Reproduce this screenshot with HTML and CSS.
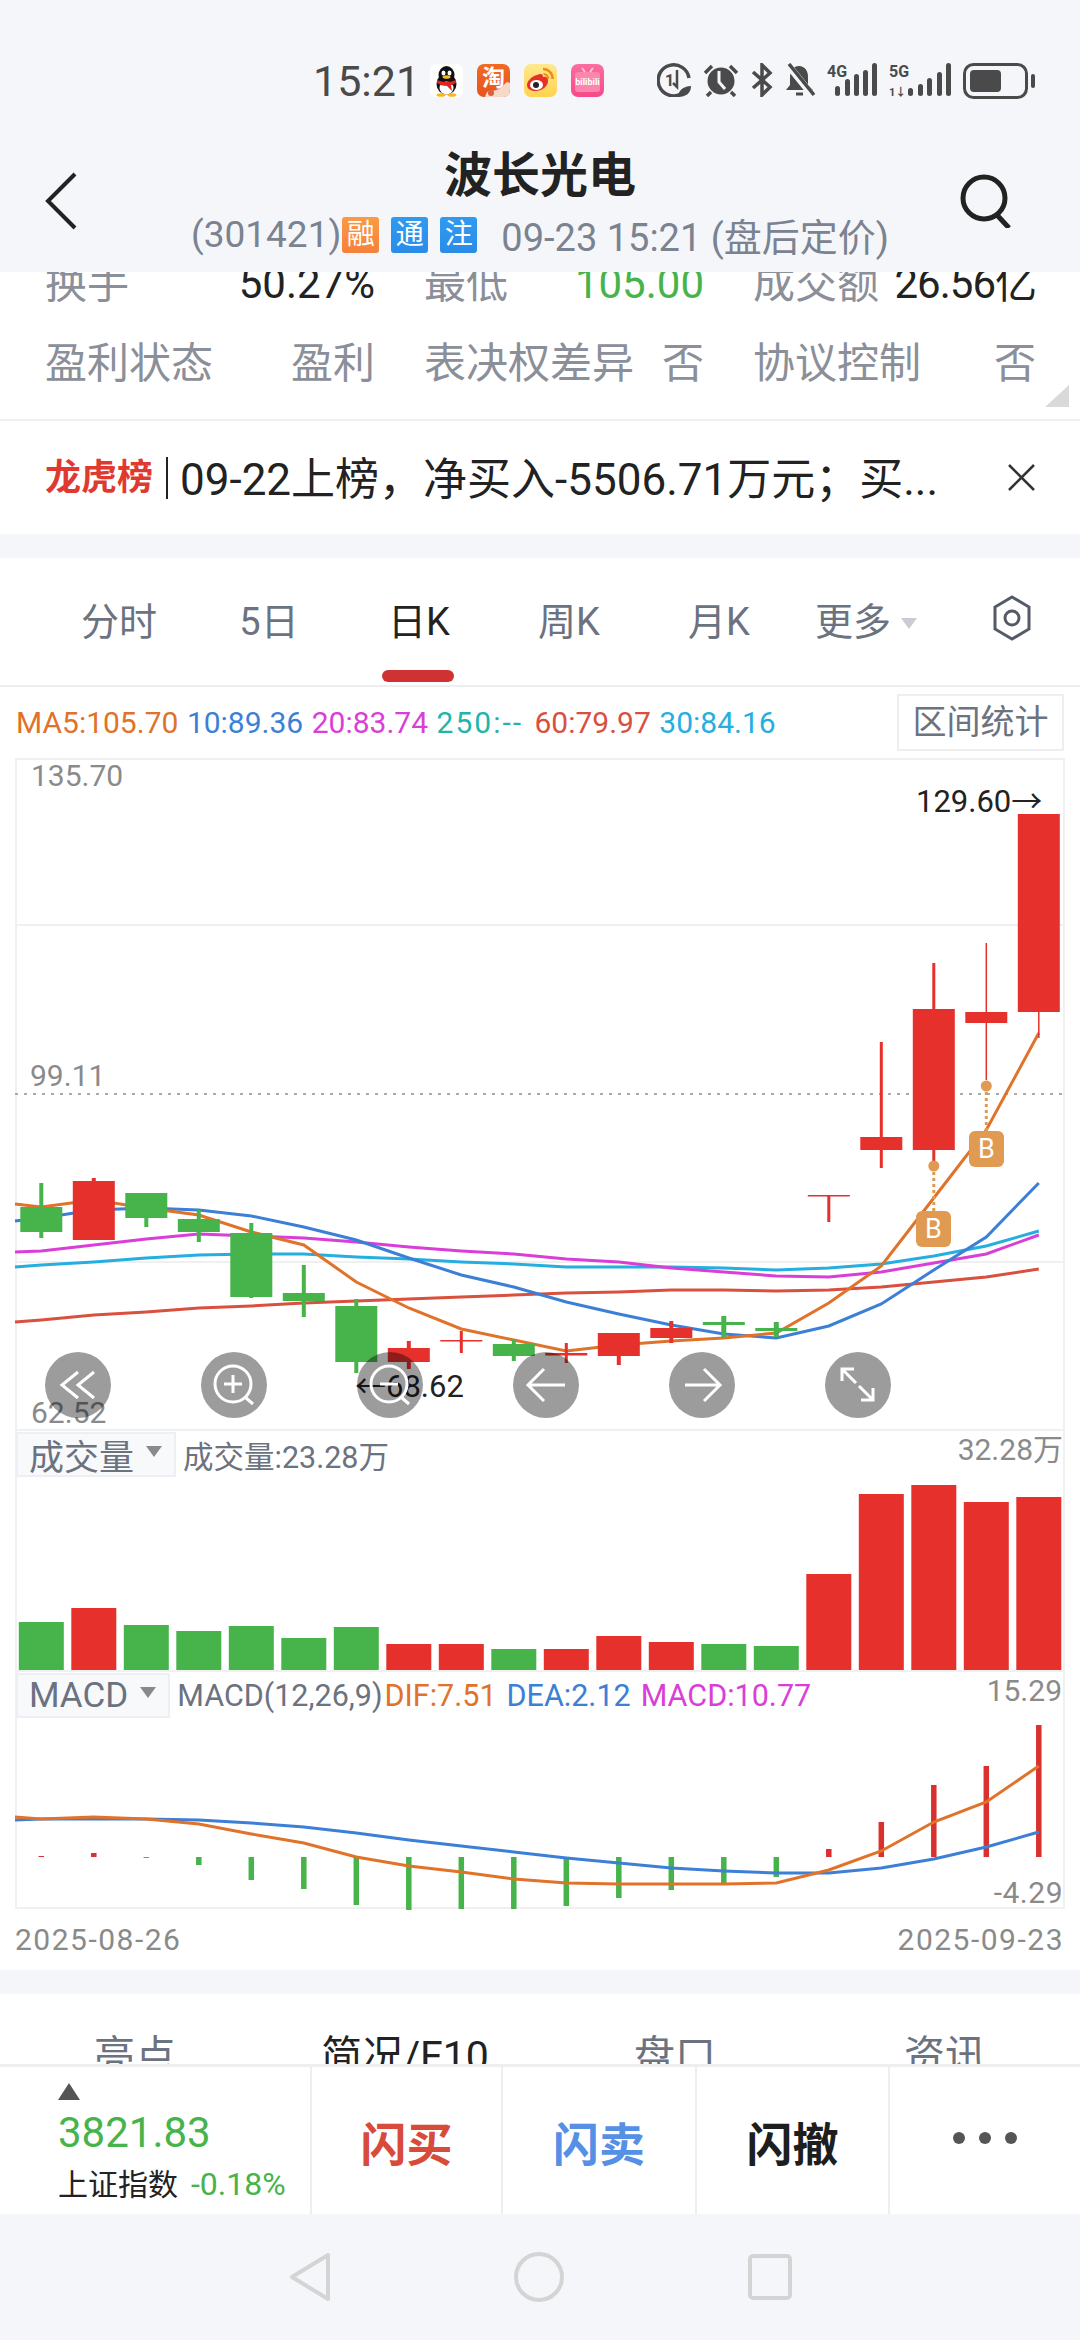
FILE: index.html
```html
<!DOCTYPE html>
<html lang="zh-CN">
  <head>
    <meta charset="UTF-8" />
    <meta name="viewport" content="width=device-width, initial-scale=1.0" />
    <title>波长光电</title>
    <link rel="stylesheet" href="styles.css">
  </head>
  <body>
    <div class="top">
      <div class="status">
        <span class="time">15:21</span>
        <div class="app-icons">
          <svg width="33" height="33" viewBox="0 0 33 33">
            <rect width="33" height="33" rx="6" fill="#fff"/>
            <ellipse cx="16.5" cy="20" rx="10" ry="10.5" fill="#111"/>
            <ellipse cx="16.5" cy="11" rx="8" ry="9" fill="#111"/>
            <ellipse cx="16.5" cy="24" rx="7" ry="6.5" fill="#fff"/>
            <ellipse cx="13.5" cy="9" rx="2" ry="2.6" fill="#fff"/>
            <ellipse cx="19.5" cy="9" rx="2" ry="2.6" fill="#fff"/>
            <ellipse cx="16.5" cy="13" rx="4" ry="1.8" fill="#f5b81f"/>
            <path d="M7 16q9.500 4 19 0v3q-3 2-5 2l1 6-5-5q-6 0-10-3z" fill="#e0241f"/>
            <ellipse cx="11" cy="31" rx="4.500" ry="1.800" fill="#f5b81f"/>
            <ellipse cx="22" cy="31" rx="4.500" ry="1.800" fill="#f5b81f"/>
          </svg>
          <svg width="33" height="33" viewBox="0 0 33 33">
            <defs>
              <linearGradient id="taoBg" x1="0" y1="0" x2="0" y2="1">
                <stop offset="0" stop-color="#f26a21"/>
                <stop offset="1" stop-color="#e8521f"/>
              </linearGradient>
            </defs>
            <rect width="33" height="33" rx="7" fill="url(#taoBg)"/>
            <text class="icon-text tao" x="16.500" y="21.500">淘</text>
            <path d="M8 33q2-8 8-6l6-2 8-7 3 1v6q0 8-7 8z" fill="#f6d9c6"/>
            <circle cx="14" cy="29" r="3" fill="#d9623a"/>
          </svg>
          <svg width="33" height="33" viewBox="0 0 33 33">
            <defs>
              <linearGradient id="weiboBg" x1="0" y1="0" x2="0" y2="1">
                <stop offset="0" stop-color="#ffe88f"/>
                <stop offset="1" stop-color="#ffd34f"/>
              </linearGradient>
            </defs>
            <rect width="33" height="33" rx="7" fill="url(#weiboBg)"/>
            <path d="M13 11q6-3 6 2q5-1 5 4c0 6-7 10-12 10c-5 0-9-2-9-6c0-4 5-9 10-10z" fill="#e4312b"/>
            <ellipse cx="12.500" cy="21" rx="6.500" ry="5" fill="#fff"/>
            <circle cx="12" cy="21" r="3" fill="#222"/>
            <path d="M19 5a9.500 9.500 0 0 1 9.500 10" fill="none" stroke="#f08a1d" stroke-width="2.500"/>
            <path d="M19.500 10a4.500 4.500 0 0 1 4.500 5" fill="none" stroke="#f08a1d" stroke-width="2.200"/>
          </svg>
          <svg width="33" height="33" viewBox="0 0 33 33">
            <defs>
              <linearGradient id="biliBg" x1="0" y1="0" x2="0" y2="1">
                <stop offset="0" stop-color="#fb6e9f"/>
                <stop offset="1" stop-color="#f8488a"/>
              </linearGradient>
            </defs>
            <rect width="33" height="33" rx="7" fill="url(#biliBg)"/>
            <rect x="4" y="8" width="25" height="20" rx="3" fill="#fc86ad"/>
            <path d="M11 4l3 4M22 4l-3 4" stroke="#ffc3d6" stroke-width="2"/>
            <text class="icon-text bili" x="16.500" y="21">bilibili</text>
          </svg>
        </div>
        <div class="sys-icons">
          <svg width="34" height="34" viewBox="0 0 34 34">
            <path d="M24 31A15.500 15.500 0 1 1 32 15" fill="none" stroke="#4a4a4a" stroke-width="3.500"/>
            <text class="icon-text sys-small" x="8" y="23">1</text>
            <path d="M20 7v17l-4-4" fill="none" stroke="#4a4a4a" stroke-width="2.500"/>
            <path d="M21 34c0-6 5-11 13-11c0 7-5 11-13 11z" fill="#4a4a4a"/>
          </svg>
          <svg width="36" height="34" viewBox="0 0 36 34">
            <circle cx="18" cy="18" r="13.500" fill="#4a4a4a"/>
            <path d="M16 8v11l6 7" fill="none" stroke="#f5f6fa" stroke-width="3"/>
            <path d="M2 10l7-7M34 10l-7-7M8 29l-4 4M28 29l4 4" stroke="#4a4a4a" stroke-width="3.500"/>
          </svg>
          <svg width="22" height="34" viewBox="0 0 22 34">
            <path d="M2 9l17 15-8 8V2l8 8L2 25" fill="none" stroke="#4a4a4a" stroke-width="3.500"/>
          </svg>
          <svg width="30" height="34" viewBox="0 0 30 34">
            <path d="M14 3c6 0 9 5 9 11v8l5 5H1l4-5v-8c0-6 3-11 9-11z" fill="#4a4a4a"/>
            <path d="M11 31h7" stroke="#4a4a4a" stroke-width="3"/>
            <path d="M2 1l26 32" stroke="#f5f6fa" stroke-width="7"/>
            <path d="M4 1l25 31" stroke="#4a4a4a" stroke-width="3.500"/>
          </svg>
          <svg width="50" height="34" viewBox="0 0 50 34">
            <text class="icon-text sys-net" x="0" y="14">4G</text>
            <rect x="8" y="23" width="5" height="10" rx="2.500" fill="#4a4a4a"/>
            <rect x="18" y="16" width="5" height="17" rx="2.500" fill="#4a4a4a"/>
            <rect x="27" y="11" width="5" height="22" rx="2.500" fill="#4a4a4a"/>
            <rect x="36" y="7" width="5" height="26" rx="2.500" fill="#4a4a4a"/>
            <rect x="45" y="0" width="5" height="33" rx="2.500" fill="#4a4a4a"/>
          </svg>
          <svg width="62" height="34" viewBox="0 0 62 34">
            <text class="icon-text sys-net" x="0" y="14">5G</text>
            <text class="icon-text sys-tiny" x="0" y="33">1↓</text>
            <rect x="19" y="25" width="5" height="8" rx="2.500" fill="#4a4a4a"/>
            <rect x="29" y="21" width="5" height="12" rx="2.500" fill="#4a4a4a"/>
            <rect x="38" y="15" width="5" height="18" rx="2.500" fill="#4a4a4a"/>
            <rect x="48" y="9" width="5" height="24" rx="2.500" fill="#4a4a4a"/>
            <rect x="57" y="0" width="5" height="33" rx="2.500" fill="#4a4a4a"/>
          </svg>
          <svg width="72" height="36" viewBox="0 0 72 36">
            <rect x="1.500" y="1.500" width="62" height="33" rx="9" fill="none" stroke="#4a4a4a" stroke-width="3"/>
            <rect x="7" y="7" width="31" height="22" rx="4" fill="#4a4a4a"/>
            <rect x="68" y="11" width="4" height="14" rx="2" fill="#4a4a4a"/>
          </svg>
        </div>
      </div>
      <div class="navbar">
        <svg class="back" width="32" height="58" viewBox="0 0 32 58">
          <path d="M30 2L3 29l27 27" fill="none" stroke="#222" stroke-width="4"/>
        </svg>
        <div class="stock">
          <div class="stock-name">波长光电</div>
          <div class="stock-sub">
            <span>(301421)</span>
            <span class="tag tag-orange">融</span>
            <span class="tag tag-blue">通</span>
            <span class="tag tag-blue">注</span>
            <span class="stock-time">09-23 15:21 (盘后定价)</span>
          </div>
        </div>
        <svg class="search" width="52" height="54" viewBox="0 0 52 54">
          <circle cx="24" cy="24" r="21" fill="none" stroke="#222" stroke-width="5"/>
          <path d="M37 41l12 13" stroke="#222" stroke-width="5"/>
        </svg>
      </div>
    </div>

    <div class="quote">
      <div class="quote-row">
        <div class="quote-cell"><span>换手</span><b>50.27%</b></div>
        <div class="quote-cell"><span>最低</span><b class="down">105.00</b></div>
        <div class="quote-cell"><span>成交额</span><b class="tight">26.56亿</b></div>
      </div>
      <div class="quote-row">
        <div class="quote-cell"><span>盈利状态</span><span>盈利</span></div>
        <div class="quote-cell"><span>表决权差异</span><span>否</span></div>
        <div class="quote-cell"><span>协议控制</span><span>否</span></div>
      </div>
      <div class="fold-mark"></div>
    </div>

    <div class="notice">
      <span class="notice-tag">龙虎榜</span>
      <span class="notice-text">09-22上榜，净买入-5506.71万元；买...</span>
      <svg class="notice-close" width="27" height="27" viewBox="0 0 27 27">
        <path d="M1 1l25 25M26 1L1 26" stroke="#333" stroke-width="2.500"/>
      </svg>
    </div>

    <div class="tabs">
      <div class="tab">分时</div>
      <div class="tab">5日</div>
      <div class="tab active">日K</div>
      <div class="tab">周K</div>
      <div class="tab">月K</div>
      <div class="tab tab-more">更多<i class="caret"></i></div>
      <svg class="tab-gear" width="40" height="46" viewBox="0 0 40 46">
        <path d="M20 2l17 10v22L20 44 3 34V12z" fill="none" stroke="#555b66" stroke-width="3"/>
        <circle cx="20" cy="23" r="7" fill="none" stroke="#555b66" stroke-width="3"/>
      </svg>
    </div>

    <div class="ma-row">
      <span class="c-orange">MA5:105.70</span>
      <span class="c-blue">10:89.36</span>
      <span class="c-magenta">20:83.74</span>
      <span class="c-teal">250:--</span>
      <span class="c-red">60:79.97</span>
      <span class="c-cyan">30:84.16</span>
      <div class="range-btn">区间统计</div>
    </div>

    <div class="chart">
      <div class="pane pane-k">
        <svg id="kChart" class="pane-svg" viewBox="15 758 1050 671"></svg>
        <span class="axis k-high">135.70</span>
        <span class="axis k-mid">99.11</span>
        <span class="axis k-low">62.52</span>
        <span class="peak k-max">129.60→</span>
        <span class="peak k-min">←68.62</span>
        <div class="buy buy-a">B</div>
        <div class="buy buy-b">B</div>
        <div class="tools">
          <div class="tool">
            <svg width="66" height="66" viewBox="0 0 66 66"><path d="M33 20L17 33l16 13M49 20L33 33l16 13"/></svg>
          </div>
          <div class="tool">
            <svg width="66" height="66" viewBox="0 0 66 66"><circle cx="32" cy="32" r="18"/><path d="M32 23v18M23 32h18M45 46l7 6"/></svg>
          </div>
          <div class="tool">
            <svg width="66" height="66" viewBox="0 0 66 66"><circle cx="32" cy="32" r="18"/><path d="M23 32h18M45 46l7 6"/></svg>
          </div>
          <div class="tool">
            <svg width="66" height="66" viewBox="0 0 66 66"><path d="M52 33H15M31 17L15 33l16 16"/></svg>
          </div>
          <div class="tool">
            <svg width="66" height="66" viewBox="0 0 66 66"><path d="M16 33h35M35 17l16 16-16 16"/></svg>
          </div>
          <div class="tool">
            <svg width="66" height="66" viewBox="0 0 66 66"><path d="M17 29V17h12M17 17l14 14M48 36v12H36M48 48L34 34"/></svg>
          </div>
        </div>
      </div>

      <div class="pane pane-vol">
        <svg id="volChart" class="pane-svg" viewBox="15 1429 1050 241"></svg>
        <div class="pane-head">
          <div class="picker">成交量<i class="picker-caret"></i></div>
          <span class="pane-info">成交量:23.28万</span>
        </div>
        <span class="axis vol-max">32.28万</span>
      </div>

      <div class="pane pane-macd">
        <svg id="macdChart" class="pane-svg" viewBox="15 1670 1050 239"></svg>
        <div class="pane-head">
          <div class="picker">MACD<i class="picker-caret"></i></div>
          <span class="pane-info">MACD(12,26,9)</span>
          <span class="pane-info c-orange">DIF:7.51</span>
          <span class="pane-info gap c-blue">DEA:2.12</span>
          <span class="pane-info gap c-magenta">MACD:10.77</span>
        </div>
        <span class="axis macd-max">15.29</span>
        <span class="axis macd-min">-4.29</span>
      </div>
    </div>

    <div class="dates">
      <span>2025-08-26</span>
      <span>2025-09-23</span>
    </div>

    <div class="sub-tabs">
      <div class="sub-tab">亮点</div>
      <div class="sub-tab active">简况/F10</div>
      <div class="sub-tab">盘口</div>
      <div class="sub-tab">资讯</div>
    </div>

    <div class="action-bar">
      <div class="index-cell">
        <i class="index-up"></i>
        <div class="index-value">3821.83</div>
        <div class="index-name">上证指数<span class="index-pct">-0.18%</span></div>
      </div>
      <div class="action action-buy">闪买</div>
      <div class="action action-sell">闪卖</div>
      <div class="action action-cancel">闪撤</div>
      <div class="action action-more"><i></i><i></i><i></i></div>
    </div>

    <div class="sys-nav">
      <svg width="41" height="50" viewBox="0 0 41 50">
        <path d="M39 3v44L3 25z" fill="none" stroke="#d4d4d4" stroke-width="4" stroke-linejoin="round"/>
      </svg>
      <svg width="50" height="50" viewBox="0 0 50 50">
        <circle cx="25" cy="25" r="23" fill="none" stroke="#d4d4d4" stroke-width="4"/>
      </svg>
      <svg width="44" height="46" viewBox="0 0 44 46">
        <rect x="2" y="2" width="40" height="42" rx="3" fill="none" stroke="#d4d4d4" stroke-width="4"/>
      </svg>
    </div>

    <script src="chart.js"></script>
  </body>
</html>
```

FILE: styles.css
```css
* {
  box-sizing: border-box;
}

body {
  margin: 0;
  width: 1080px;
  height: 2340px;
  overflow: hidden;
  background-color: #f5f6fa;
  font-family: Roboto, "Noto Sans CJK SC", sans-serif;
  color: #222;
}

/* status bar + title */
.top {
  height: 272px;
}

.status {
  height: 130px;
  padding: 59px 0 0 313px;
  display: flex;
  align-items: flex-start;
}

.time {
  font-size: 43px;
  line-height: 44px;
  width: 105px;
  color: #4a4a4a;
  white-space: nowrap;
}

.app-icons {
  display: flex;
  gap: 14px;
  margin: 5px 0 0 12px;
}

.sys-icons {
  display: flex;
  gap: 12px;
  margin: 4px 0 0 53px;
}

.icon-text {
  font-family: Roboto, "Noto Sans CJK SC", sans-serif;
  fill: #4a4a4a;
}

.tao {
  font-size: 23px;
  font-weight: 700;
  fill: #fff;
  text-anchor: middle;
}

.bili {
  font-size: 9px;
  font-weight: 700;
  fill: #fff;
  text-anchor: middle;
}

.sys-small {
  font-size: 16px;
  font-weight: 700;
}

.sys-net {
  font-size: 16px;
  font-weight: 700;
}

.sys-tiny {
  font-size: 11px;
  font-weight: 700;
}

.navbar {
  height: 142px;
  display: grid;
  grid-template-columns: 1fr auto 1fr;
  align-items: center;
}

.back {
  margin-left: 45px;
}

.search {
  justify-self: end;
  margin-right: 68px;
}

.stock {
  text-align: center;
}

.stock-name {
  font-size: 48px;
  line-height: 56px;
  font-weight: 700;
}

.stock-sub {
  margin-top: 11px;
  display: flex;
  align-items: center;
  height: 40px;
  font-size: 37px;
  color: #7b8290;
  white-space: nowrap;
}

.tag {
  width: 37px;
  height: 36px;
  margin-left: 12px;
  border-radius: 3px;
  font-size: 28px;
  line-height: 36px;
  color: #fff;
  text-align: center;
}

.tag-orange {
  margin-left: 1px;
  background: linear-gradient(#fb9a45, #f6803a);
}

.tag-blue {
  background: linear-gradient(#2f9bf0, #2a8ce8);
}

.stock-time {
  margin-left: 24px;
  font-size: 38px;
}

/* quote table, already scrolled under the header */
.quote {
  position: relative;
  height: 149px;
  background-color: #fff;
  border-bottom: 2px solid #f0f0f0;
  overflow: hidden;
}

.quote-row {
  height: 80px;
  padding: 0 43px 2px 45px;
  display: grid;
  grid-template-columns: 330px 280px 283px;
  column-gap: 49px;
  align-items: center;
  font-size: 42px;
  color: #8a8f99;
}

.quote-row:first-child {
  margin-top: -32px;
}

.quote-cell {
  display: flex;
  justify-content: space-between;
  align-items: baseline;
  white-space: nowrap;
}

.quote-cell b {
  font-weight: 400;
  color: #222;
}

.quote-cell b.down {
  color: #47b34b;
}

.quote-cell b.tight {
  letter-spacing: -1px;
}

.fold-mark {
  position: absolute;
  right: 11px;
  bottom: 12px;
  width: 24px;
  height: 22px;
  background-color: #d9d9d9;
  clip-path: polygon(100% 0, 100% 100%, 0 100%);
}

/* notice strip */
.notice {
  height: 113px;
  padding: 0 45px;
  background-color: #fff;
  display: flex;
  align-items: center;
}

.notice-tag {
  font-size: 36px;
  font-weight: 700;
  color: #e03a30;
  padding-right: 13px;
  border-right: 2px solid #222;
  line-height: 42px;
  white-space: nowrap;
}

.notice-text {
  margin: 0 0 3px 12px;
  font-size: 44px;
  white-space: nowrap;
}

.notice-close {
  margin-left: auto;
}

/* period tabs */
.tabs {
  margin-top: 24px;
  height: 129px;
  padding: 0 0 2px 44px;
  background-color: #fff;
  border-bottom: 2px solid #eee;
  display: flex;
  align-items: center;
}

.tab {
  position: relative;
  width: 150px;
  height: 100%;
  font-size: 38px;
  line-height: 129px;
  text-align: center;
  color: #6b7280;
}

.tab.active {
  color: #222;
}

.tab.active::after {
  content: "";
  position: absolute;
  left: 38px;
  bottom: 1px;
  width: 72px;
  height: 12px;
  border-radius: 6px;
  background-color: #d03234;
}

.tab-more {
  padding-right: 6px;
}

.caret {
  display: inline-block;
  margin-left: 10px;
  vertical-align: 6px;
  border-style: solid;
  border-width: 11px 8px 0;
  border-color: #c9ccd2 transparent transparent;
}

.tab-gear {
  margin: 0 0 6px 48px;
}

/* moving averages */
.ma-row {
  height: 71px;
  padding: 0 16px;
  background-color: #fff;
  display: flex;
  align-items: center;
  gap: 8.5px;
  font-size: 30px;
  white-space: nowrap;
}

.range-btn {
  margin-left: auto;
  width: 167px;
  height: 57px;
  border: 2px solid #eee;
  font-size: 34px;
  line-height: 53px;
  text-align: center;
  color: #6b7280;
}

.c-orange { color: #e0722a; }
.c-blue { color: #3c7fd6; }
.c-magenta { color: #d93fd8; }
.c-teal { color: #1fb5ad; letter-spacing: 2px; margin-right: 3px; }
.c-red { color: #d9503f; }
.c-cyan { color: #25aee0; }

/* chart panes */
.chart {
  margin: 0;
  padding: 0 15px;
  background-color: #fff;
}

.pane {
  position: relative;
  width: 1050px;
  box-shadow: inset 2px 0 0 #f0f0f0, inset -2px 0 0 #f0f0f0, inset 0 2px 0 #f0f0f0;
}

.pane-k {
  height: 671px;
}

.pane-vol {
  height: 241px;
}

.pane-macd {
  height: 239px;
  box-shadow: inset 2px 0 0 #f0f0f0, inset -2px 0 0 #f0f0f0, inset 0 2px 0 #f0f0f0, inset 0 -2px 0 #f0f0f0;
}

.pane-svg {
  position: absolute;
  left: 0;
  top: 0;
  width: 1050px;
  height: 100%;
  overflow: visible;
}

.axis {
  position: absolute;
  font-size: 30px;
  line-height: 36px;
  color: #8a8a8a;
  white-space: nowrap;
}

.k-high { left: 16px; top: 0; }
.k-mid { left: 15px; top: 300px; }
.k-low { left: 16px; top: 637px; }
.vol-max { right: 2px; top: 3px; }
.macd-max { right: 3px; top: 3px; }
.macd-min { right: 2px; top: 205px; letter-spacing: 0.5px; }

.peak {
  position: absolute;
  font-size: 31px;
  line-height: 36px;
  color: #222;
  white-space: nowrap;
}

.k-max { left: 901px; top: 26px; }
.k-min { left: 340px; top: 611px; }

.buy {
  position: absolute;
  width: 35px;
  height: 36px;
  border-radius: 6px;
  background-color: #e09a52;
  color: #fff;
  font-size: 27px;
  line-height: 36px;
  text-align: center;
}

.buy-a { left: 901px; top: 453px; }
.buy-b { left: 954px; top: 373px; }

.tools {
  position: absolute;
  left: 30px;
  top: 594px;
  display: flex;
  gap: 90px;
}

.tool {
  width: 66px;
  height: 66px;
  border-radius: 50%;
  background-color: rgba(0, 0, 0, 0.39);
}

.tool svg {
  display: block;
  fill: none;
  stroke: #fff;
  stroke-width: 3;
}

.pane-head {
  position: relative;
  display: flex;
  align-items: center;
  padding: 3px 0 0 1px;
  white-space: nowrap;
}

.picker {
  height: 45px;
  padding: 0 12px 0 11px;
  background-color: #f8f9fb;
  border: 2px solid #eeeff3;
  display: flex;
  align-items: center;
  font-size: 35px;
  color: #6b7280;
}

.picker-caret {
  margin-left: 12px;
  margin-bottom: 6px;
  border-style: solid;
  border-width: 11px 8px 0;
  border-color: #8a8a8a transparent transparent;
}

.pane-info {
  margin-left: 7px;
  font-size: 30.5px;
  color: #6b7280;
}

.pane-info.c-orange { margin-left: 2px; color: #e0722a; }
.pane-info.c-blue { color: #3c7fd6; }
.pane-info.c-magenta { color: #d93fd8; }
.pane-info.gap { margin-left: 10px; }

.dates {
  height: 61px;
  padding: 0 16px 0 15px;
  background-color: #fff;
  display: flex;
  justify-content: space-between;
  align-items: center;
  font-size: 30px;
  letter-spacing: 1.5px;
  color: #8a8a8a;
}

/* detail tabs, mostly hidden by the action bar */
.sub-tabs {
  margin-top: 24px;
  height: 70px;
  padding-top: 39px;
  background-color: #fff;
  display: grid;
  grid-template-columns: repeat(4, 1fr);
  overflow: hidden;
}

.sub-tab {
  font-size: 41px;
  line-height: 46px;
  text-align: center;
  color: #6b7280;
}

.sub-tab.active {
  color: #222;
}

.action-bar {
  height: 150px;
  background-color: #fff;
  border-top: 3px solid #eee;
  display: flex;
}

.index-cell {
  width: 310px;
  padding: 16px 0 0 58px;
}

.index-up {
  display: block;
  width: 0;
  border-style: solid;
  border-width: 0 11px 17px;
  border-color: transparent transparent #555;
}

.index-value {
  margin-top: 15px;
  font-size: 42px;
  line-height: 36px;
  color: #47b34b;
}

.index-name {
  margin-top: 13px;
  font-size: 30px;
  line-height: 40px;
  white-space: nowrap;
}

.index-pct {
  margin-left: 13px;
  font-size: 32px;
  color: #47b34b;
}

.action {
  width: 193px;
  border-left: 2px solid #eee;
  display: flex;
  justify-content: center;
  align-items: center;
  font-size: 46px;
  font-weight: 700;
}

.action-buy { width: 191px; color: #d84a3a; }
.action-sell { width: 194px; color: #5590e5; }
.action-cancel { color: #1e1e1e; }

.action-more {
  flex: 1;
  width: auto;
  gap: 14px;
  padding-bottom: 6px;
}

.action-more i {
  width: 12px;
  height: 12px;
  border-radius: 50%;
  background-color: #555;
}

.sys-nav {
  height: 126px;
  display: flex;
  justify-content: center;
  align-items: center;
  gap: 184px;
}
```

FILE: chart.js
```javascript
var NS = "http://www.w3.org/2000/svg";
var RED = "#e6302b";
var GREEN = "#47b34b";

function add(svg, tag, attrs) {
  var el = document.createElementNS(NS, tag);
  for (var k in attrs) el.setAttribute(k, attrs[k]);
  svg.appendChild(el);
  return el;
}

function barX(i) {
  return 41.3 + 52.5 * i;
}

function drawLine(svg, startY, values, color, width) {
  var pts = ["15," + startY];
  values.forEach(function (y, i) {
    pts.push(barX(i) + "," + y);
  });
  add(svg, "polyline", { points: pts.join(" "), fill: "none", stroke: color, "stroke-width": width });
}

// [body top, body bottom, wick top, wick bottom, color, wick width]
var candles = [
  [1207, 1232, 1183, 1238, GREEN, 4],
  [1181, 1240, 1178, 1240, RED, 4],
  [1193, 1218, 1193, 1227, GREEN, 4],
  [1219, 1232, 1210, 1242, GREEN, 4],
  [1233, 1297, 1223, 1298, GREEN, 4],
  [1293, 1301, 1265, 1317, GREEN, 4],
  [1306, 1362, 1299, 1373, GREEN, 4],
  [1348, 1362, 1341, 1369, RED, 4],
  [1340, 1341.5, 1331, 1353, RED, 3],
  [1344, 1356, 1340, 1361, GREEN, 4],
  [1353, 1355.5, 1343, 1363, RED, 3],
  [1333, 1356, 1333, 1365, RED, 4],
  [1328, 1338, 1321, 1343, RED, 4],
  [1322, 1325, 1316, 1337, GREEN, 5],
  [1328, 1331, 1322, 1337, GREEN, 5],
  [1195, 1196.5, 1195, 1222, RED, 3],
  [1137, 1150, 1042, 1168, RED, 3],
  [1009, 1150, 963, 1162, RED, 3],
  [1012, 1023, 943, 1080, RED, 1.5],
  [814, 1012, 814, 1038, RED, 1.5]
];

var ma5 = [1207, 1200, 1208, 1215, 1232, 1245, 1282, 1308, 1329, 1340, 1351, 1345, 1341, 1338, 1333, 1303, 1266, 1198, 1130, 1033];
var ma10 = [1218, 1210, 1208, 1210, 1216, 1227, 1240, 1258, 1275, 1287, 1302, 1314, 1325, 1334, 1338, 1326, 1304, 1270, 1237, 1183];
var ma20 = [1251, 1245, 1239, 1234, 1236, 1238, 1242, 1247, 1251, 1254, 1259, 1262, 1268, 1272, 1276, 1277, 1272, 1263, 1254, 1235];
var ma30 = [1265, 1262, 1258, 1255, 1254, 1254, 1257, 1259, 1262, 1264, 1267, 1267, 1267, 1268, 1270, 1268, 1264, 1256, 1246, 1231];
var ma60 = [1320, 1315, 1312, 1308, 1306, 1303, 1301, 1299, 1297, 1295, 1293, 1292, 1290, 1290, 1291, 1290, 1287, 1282, 1277, 1269];

var volumes = [1622, 1608, 1625, 1631, 1626, 1638, 1627, 1644, 1644, 1649, 1649, 1636, 1642, 1644, 1646, 1574, 1494, 1485, 1502, 1497];
var volColors = "grggggg" + "rrgrrrgg" + "rrrrr";

var macdBars = [1856, 1853, 1858, 1865, 1880, 1889, 1905, 1910, 1909, 1909, 1906, 1898, 1890, 1883, 1877, 1849, 1822, 1785, 1766, 1725];
var dif = [1819, 1817, 1819, 1824, 1834, 1843, 1857, 1866, 1872, 1879, 1883, 1884, 1884, 1884, 1883, 1870, 1851, 1822, 1802, 1766];
var dea = [1819, 1819, 1819, 1820, 1823, 1827, 1833, 1840, 1846, 1852, 1858, 1863, 1868, 1871, 1873, 1873, 1868, 1859, 1847, 1832];

var k = document.getElementById("kChart");
add(k, "path", { d: "M15 925H1065M15 1262H1065", stroke: "#f0f0f0", "stroke-width": 2 });
add(k, "path", { d: "M15 1094H1065", stroke: "#aaa", "stroke-width": 2, "stroke-dasharray": "3 6" });

drawLine(k, 1267, ma30, "#25aee0", 3);
drawLine(k, 1252, ma20, "#d93fd8", 3);
drawLine(k, 1322, ma60, "#d9503f", 3);
drawLine(k, 1221, ma10, "#3c7fd6", 3);
drawLine(k, 1204, ma5, "#e0722a", 3);

candles.forEach(function (c, i) {
  var x = barX(i);
  add(k, "rect", { x: x - c[5] / 2, y: c[2], width: c[5], height: c[3] - c[2], fill: c[4] });
  add(k, "rect", { x: x - 21, y: c[0], width: 42, height: c[1] - c[0], fill: c[4] });
});

// buy markers under the two candles
[[barX(17), 1166, 1172, 1211], [barX(18), 1086, 1092, 1131]].forEach(function (m) {
  add(k, "circle", { cx: m[0], cy: m[1], r: 5.5, fill: "#e09a52" });
  add(k, "path", { d: "M" + m[0] + " " + m[2] + "V" + m[3], stroke: "#e09a52", "stroke-width": 3, "stroke-dasharray": "3 3" });
});

var vol = document.getElementById("volChart");
volumes.forEach(function (top, i) {
  add(vol, "rect", {
    x: barX(i) - 22.5,
    y: top,
    width: 45,
    height: 1670 - top,
    fill: volColors[i] === "r" ? RED : GREEN
  });
});

var macd = document.getElementById("macdChart");
macdBars.forEach(function (end, i) {
  var up = end < 1857;
  add(macd, "rect", {
    x: barX(i) - 2.75,
    y: up ? end : 1857,
    width: 5.5,
    height: Math.abs(end - 1857) || 1,
    fill: i < 2 || i > 14 ? "#d8312e" : GREEN
  });
});
drawLine(macd, 1820, dea, "#3c7fd6", 3);
drawLine(macd, 1817, dif, "#e0722a", 3);
```
